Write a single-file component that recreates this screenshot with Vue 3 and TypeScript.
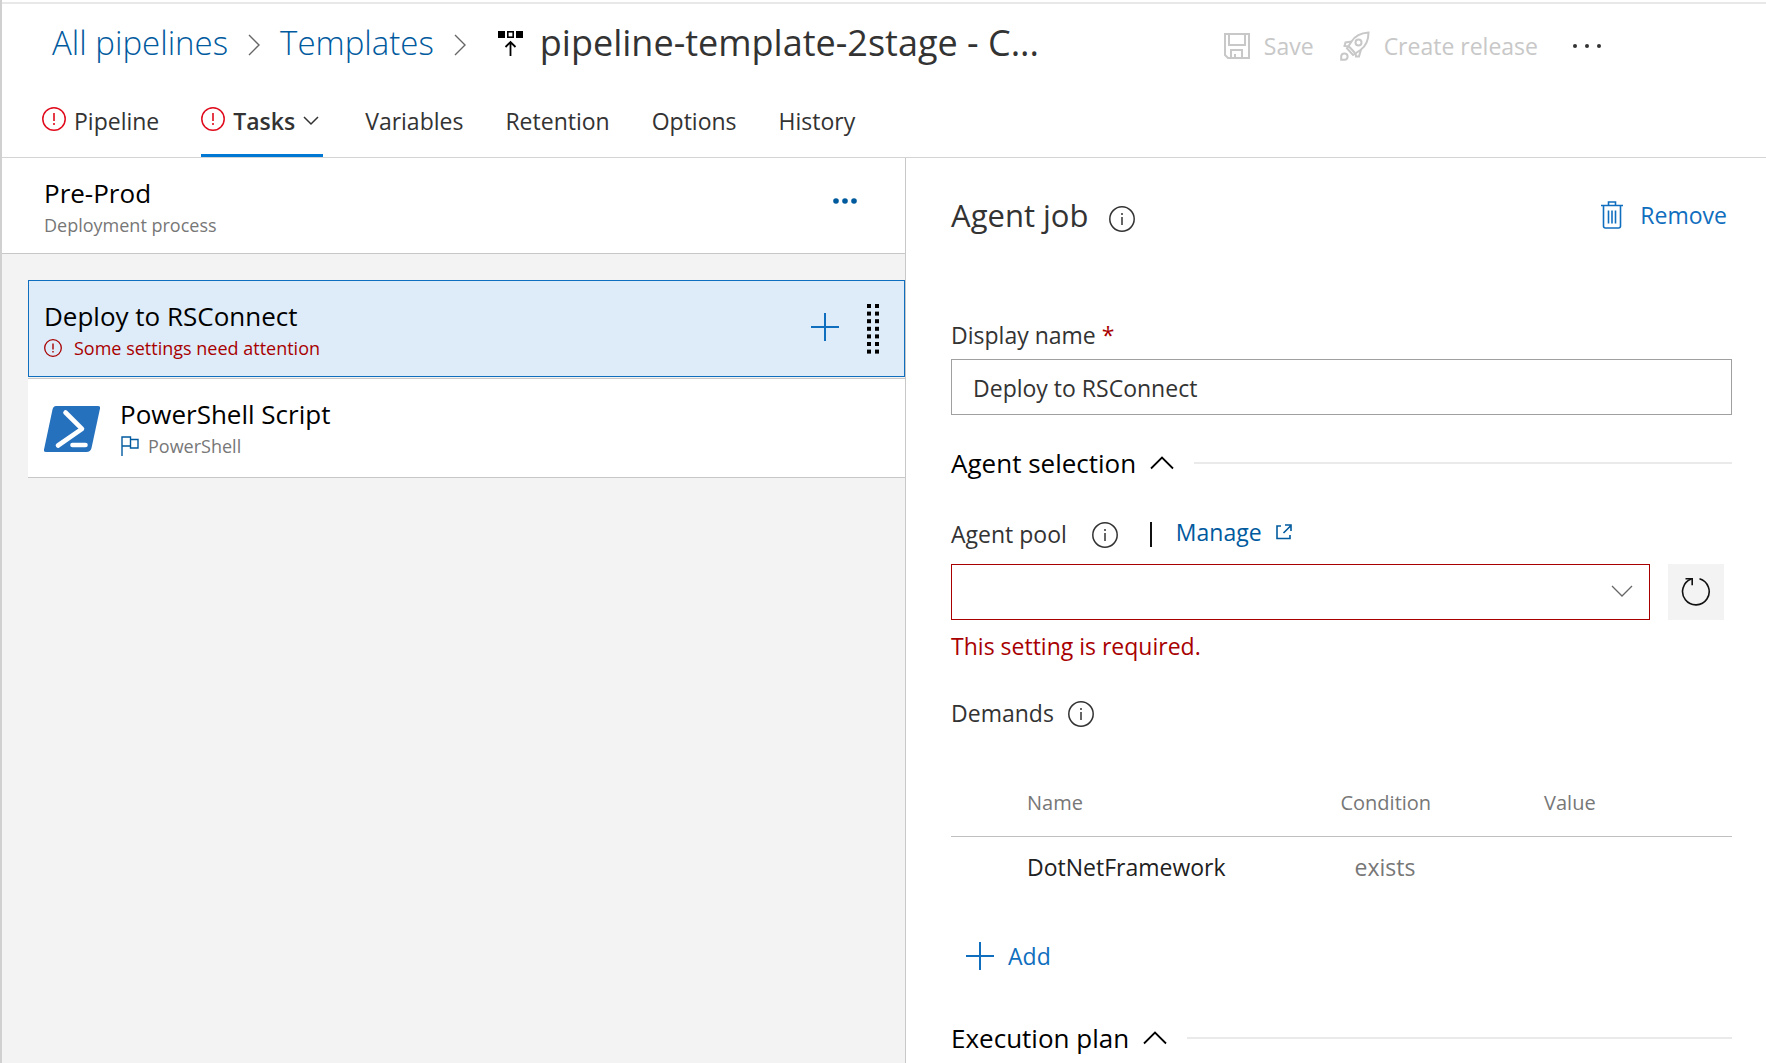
<script setup lang="ts">
import { ref } from 'vue'

interface Tab {
  label: string
  error?: boolean
  menu?: boolean
}

interface Demand {
  name: string
  condition: string
  value: string
}

const tabs: Tab[] = [
  { label: 'Pipeline', error: true },
  { label: 'Tasks', error: true, menu: true },
  { label: 'Variables' },
  { label: 'Retention' },
  { label: 'Options' },
  { label: 'History' },
]
const activeTab = ref('Tasks')

const displayName = ref('Deploy to RSConnect')
const agentPool = ref('')
const demands = ref<Demand[]>([{ name: 'DotNetFramework', condition: 'exists', value: '' }])
const gripRows = [0, 1, 2, 3, 4, 5, 6]
</script>

<template>
  <div class="page">
    <header class="header">
      <div class="title-row">
        <nav class="crumbs" aria-label="Breadcrumb">
          <a href="#">All pipelines</a>
          <svg class="crumb-sep" width="12" height="22" viewBox="0 0 12 22"><path d="M1 1l10 10L1 21" /></svg>
          <a href="#">Templates</a>
          <svg class="crumb-sep" width="12" height="22" viewBox="0 0 12 22"><path d="M1 1l10 10L1 21" /></svg>
          <svg class="release-icon" width="26" height="26" viewBox="0 0 26 26">
            <path d="M0 1h7v7H0zM18 1h7v7h-7z" fill="#000" />
            <rect x="9.8" y="1.8" width="5.4" height="5.4" fill="none" stroke="#000" stroke-width="1.6" />
            <path d="M12.5 26V12M7.5 17l5-5 5 5" fill="none" stroke="#000" stroke-width="1.8" />
          </svg>
          <h1>pipeline-template-2stage - C...</h1>
        </nav>
        <div class="actions">
          <button type="button" class="action" disabled>
            <svg width="26" height="26" viewBox="0 0 26 26" fill="none" stroke="currentColor" stroke-width="2">
              <path d="M1 1h24v24H4l-3-3z" />
              <path d="M5 1v11h16V1M7 25v-8h11v8M11 25v-4" />
            </svg>
            <span>Save</span>
          </button>
          <button type="button" class="action" disabled>
            <svg width="30" height="30" viewBox="0 0 30 30" fill="none" stroke="currentColor" stroke-width="2">
              <path d="M28.500 1.500C21 2 15 5 11.500 10.500L7 17.500l6 6.500 7.500-5C26 15 28.500 9 28.500 1.500z" />
              <circle cx="18.500" cy="11.500" r="3" />
              <path d="M12 10.500l-6.500 1-1 3.500 4 .5M21 18.500l-2 7h-3l-.5-3.500" />
              <path d="M9 15.500l6 6.500" />
              <path d="M1.200 28.800v-3.300a3.200 3.200 0 1 1 3.300 3.300z" />
            </svg>
            <span>Create release</span>
          </button>
          <button type="button" class="more" aria-label="More actions">
            <svg width="30" height="6" viewBox="0 0 30 6" fill="currentColor">
              <circle cx="3" cy="3" r="2" /><circle cx="15" cy="3" r="2" /><circle cx="27" cy="3" r="2" />
            </svg>
          </button>
        </div>
      </div>

      <div class="tabs" role="tablist">
        <button
          v-for="tab in tabs"
          :key="tab.label"
          type="button"
          role="tab"
          class="tab"
          :class="{ active: tab.label === activeTab }"
          :aria-selected="tab.label === activeTab"
          @click="activeTab = tab.label"
        >
          <svg v-if="tab.error" class="tab-error" width="24" height="24" viewBox="0 0 24 24">
            <circle cx="12" cy="12" r="11.200" fill="none" stroke="currentColor" stroke-width="1.500" />
            <path d="M12 6v8M12 16v2" stroke="currentColor" stroke-width="1.600" />
          </svg>
          <span>{{ tab.label }}</span>
          <svg v-if="tab.menu" width="16" height="10" viewBox="0 0 16 10" fill="none" stroke="currentColor" stroke-width="1.500">
            <path d="M1 1l7 7 7-7" />
          </svg>
        </button>
      </div>
    </header>

    <main class="body">
      <section class="process">
        <div class="stage">
          <div>
            <h2>Pre-Prod</h2>
            <p class="sub">Deployment process</p>
          </div>
          <button type="button" class="stage-more" aria-label="Stage options">
            <svg width="24" height="6" viewBox="0 0 24 6" fill="currentColor">
              <circle cx="3" cy="3" r="2.800" /><circle cx="12" cy="3" r="2.800" /><circle cx="21" cy="3" r="2.800" />
            </svg>
          </button>
        </div>

        <div class="list">
          <div class="job">
            <div>
              <h2>Deploy to RSConnect</h2>
              <p class="sub warn">
                <svg width="18" height="18" viewBox="0 0 18 18">
                  <circle cx="9" cy="9" r="8.300" fill="none" stroke="currentColor" stroke-width="1.300" />
                  <path d="M9 4.500v6M9 12v1.500" stroke="currentColor" stroke-width="1.400" />
                </svg>
                <span>Some settings need attention</span>
              </p>
            </div>
            <div class="job-tools">
              <button type="button" class="add-task" aria-label="Add a task">
                <svg width="28" height="28" viewBox="0 0 28 28"><path d="M14 0v28M0 14h28" stroke="currentColor" stroke-width="2" /></svg>
              </button>
              <svg width="12" height="50" viewBox="0 0 12 50">
                <g v-for="row in gripRows" :key="row">
                  <rect x="0" :y="row * 7.6" width="4" height="4" />
                  <rect x="8" :y="row * 7.6" width="4" height="4" />
                </g>
              </svg>
            </div>
          </div>

          <div class="task">
            <svg width="56" height="46" viewBox="0 0 56 46">
              <path d="M12 0h42q2.500 0 2 2.500L47.500 42q-1 4-5 4H2Q-.5 46 0 43.500L8.500 3.500Q9.300 0 12 0z" fill="#2671be" />
              <path d="M21.500 6.500L38 22.800 14 39.500" fill="none" stroke="#fff" stroke-width="4.600" stroke-linecap="round" stroke-linejoin="round" />
              <path d="M28.500 39h13" stroke="#fff" stroke-width="4.600" stroke-linecap="round" />
            </svg>
            <div>
              <h2>PowerShell Script</h2>
              <p class="sub">
                <svg width="18" height="20" viewBox="0 0 18 20" fill="none" stroke="#005a9e" stroke-width="1.400">
                  <path d="M1 20V1h8.500v9H1M9.500 3.500H17v8.500h-7.500v-2" />
                </svg>
                <span>PowerShell</span>
              </p>
            </div>
          </div>
        </div>
      </section>

      <section class="details">
        <div class="details-head">
          <h2>Agent job</h2>
          <svg class="info" width="26" height="26" viewBox="0 0 26 26">
            <circle cx="13" cy="13" r="12.200" /><path d="M13 11v8M13 7v2" />
          </svg>
          <button type="button" class="remove">
            <svg width="22" height="28" viewBox="0 0 22 28" fill="none" stroke="currentColor" stroke-width="1.600">
              <path d="M0 4.500h22M7.500 4V1h7v3M2.500 4.500V25q0 2 2 2h13q2 0 2-2V4.500M7.500 9.500v13M11 9.500v13M14.500 9.500v13" />
            </svg>
            <span>Remove</span>
          </button>
        </div>

        <label class="label name-label" for="display-name">Display name <span class="star">*</span></label>
        <input id="display-name" v-model="displayName" class="text-box" type="text" />

        <h3 class="section selection">
          <span>Agent selection</span>
          <svg width="24" height="14" viewBox="0 0 24 14"><path d="M1 12.500L12 1.500l11 11" /></svg>
        </h3>

        <div class="label-row pool-row">
          <label class="label" for="agent-pool">Agent pool</label>
          <svg class="info" width="26" height="26" viewBox="0 0 26 26">
            <circle cx="13" cy="13" r="12.200" /><path d="M13 11v8M13 7v2" />
          </svg>
          <span class="bar"></span>
          <a class="manage" href="#">
            <span>Manage</span>
            <svg width="16" height="16" viewBox="0 0 16 16" fill="none" stroke="currentColor" stroke-width="1.600">
              <path d="M5 2H1v12.500h13V11M7.500 9L14.500 2M9 1h6v6" />
            </svg>
          </a>
        </div>
        <div class="pool">
          <div class="select-wrap">
            <select id="agent-pool" v-model="agentPool">
              <option value=""></option>
            </select>
            <svg width="22" height="12" viewBox="0 0 22 12"><path d="M1 1l10 10L21 1" fill="none" stroke="#666" stroke-width="1.300" /></svg>
          </div>
          <button type="button" class="refresh" aria-label="Refresh">
            <svg width="30" height="30" viewBox="0 0 30 30" fill="none" stroke="#111" stroke-width="1.600">
              <path d="M18.500 1.800a13.300 13.300 0 1 1-8.200 .3" />
              <path d="M4.500 1.800h6.700v6.500" />
            </svg>
          </button>
        </div>
        <p class="error">This setting is required.</p>

        <div class="label-row demands-row">
          <span class="label">Demands</span>
          <svg class="info" width="26" height="26" viewBox="0 0 26 26">
            <circle cx="13" cy="13" r="12.200" /><path d="M13 11v8M13 7v2" />
          </svg>
        </div>
        <table class="demands">
          <thead>
            <tr><th scope="col">Name</th><th scope="col">Condition</th><th scope="col">Value</th></tr>
          </thead>
          <tbody>
            <tr v-for="d in demands" :key="d.name">
              <td>{{ d.name }}</td>
              <td class="condition">{{ d.condition }}</td>
              <td>{{ d.value }}</td>
            </tr>
          </tbody>
        </table>
        <button type="button" class="add">
          <svg width="28" height="28" viewBox="0 0 28 28"><path d="M14 0v28M0 14h28" stroke="currentColor" stroke-width="2" /></svg>
          <span>Add</span>
        </button>

        <h3 class="section plan">
          <span>Execution plan</span>
          <svg width="24" height="14" viewBox="0 0 24 14"><path d="M1 12.500L12 1.500l11 11" /></svg>
        </h3>
      </section>
    </main>
  </div>
</template>

<style>
body {
  margin: 0;
  background: #fff;
}
</style>

<style scoped>
.page {
  box-sizing: border-box;
  display: flex;
  flex-direction: column;
  height: 100vh;
  padding-top: 2px;
  overflow: hidden;
  border-left: 2px solid #d0d0d0;
  font: 23px/32px "Open Sans", "Noto Sans", sans-serif;
  color: #333;
}
h1, h2, h3, p {
  margin: 0;
  font-weight: 400;
}
a {
  text-decoration: none;
}
button {
  display: flex;
  align-items: center;
  padding: 0;
  border: 0;
  background: none;
  font: inherit;
  color: inherit;
  white-space: nowrap;
  cursor: pointer;
}
svg {
  display: block;
  flex: none;
}

.header {
  flex: none;
  border-top: 2px solid #e8e8e8;
  border-bottom: 1px solid #d4d4d4;
}
.title-row {
  display: flex;
  justify-content: space-between;
  padding: 16px 164px 16px 50px;
}
.crumbs {
  display: flex;
  align-items: center;
  height: 46px;
  white-space: nowrap;
}
.crumbs a {
  font-size: 33px;
  font-weight: 300;
  color: #005a9e;
}
.crumb-sep {
  margin: 4px 20px 0;
  fill: none;
  stroke: #666;
  stroke-width: 1.4;
}
.release-icon {
  margin: 0 16px 0 12px;
}
h1 {
  font-size: 36px;
}
.actions {
  display: flex;
  align-items: center;
  height: 52px;
}
.action {
  gap: 14px;
  margin-right: 26px;
  color: #c8c8c8;
  cursor: default;
}
.more {
  margin-left: 8px;
}

.tabs {
  display: flex;
  gap: 42px;
  padding-left: 40px;
}
.tab {
  box-sizing: border-box;
  gap: 8px;
  height: 69px;
  border-bottom: 3px solid transparent;
}
.tab.active {
  border-bottom-color: #0078d4;
  padding-right: 4px;
  font-weight: 600;
}
.tab-error {
  margin-bottom: 4px;
  color: #e00b1c;
}

.body {
  display: flex;
  flex: 1;
  min-height: 0;
}
.process {
  box-sizing: border-box;
  flex: none;
  width: 51.25%;
  border-right: 1px solid #c8c8c8;
  background: #f3f3f3;
}
.process h2 {
  font-size: 26px;
  line-height: 34px;
  color: #000;
}
.sub {
  display: flex;
  align-items: center;
  font-size: 18px;
  line-height: 30px;
  color: #777;
}
.stage {
  display: flex;
  align-items: center;
  justify-content: space-between;
  padding: 18px 48px 13px 42px;
  border-bottom: 1px solid #c8c8c8;
  background: #fff;
}
.stage-more {
  padding-bottom: 14px;
  color: #005a9e;
}
.list {
  padding: 26px 0 0 26px;
}
.job {
  display: flex;
  justify-content: space-between;
  padding: 18px 25px 13px 15px;
  border: 1px solid #106ebe;
  background: #deecf9;
}
.warn {
  gap: 12px;
  color: #a80000;
}
.job-tools {
  display: flex;
  align-items: center;
  gap: 28px;
  padding-bottom: 4px;
}
.add-task {
  padding-bottom: 4px;
  color: #106ebe;
}
.task {
  display: flex;
  align-items: center;
  gap: 20px;
  margin-top: 1px;
  padding: 18px 16px 16px;
  border: solid #c8c8c8;
  border-width: 1px 0;
  background: #fff;
}
.task .sub {
  gap: 9px;
  padding-left: 1px;
}

.details {
  flex: 1;
  min-width: 0;
  padding: 33px 34px 0 45px;
  overflow: hidden;
}
.details-head {
  display: flex;
  align-items: center;
  height: 48px;
}
.details-head h2 {
  font-size: 31px;
}
.info {
  margin: 2px 0 0 21px;
  fill: none;
  stroke: #333;
  stroke-width: 1.5;
}
.details-head .info {
  margin-top: 8px;
}
.remove {
  gap: 17px;
  margin-left: auto;
  padding-right: 5px;
  color: #106ebe;
}
.label {
  display: block;
}
.name-label {
  margin: 80px 0 8px;
}
.star {
  color: #a80000;
}
.text-box {
  box-sizing: border-box;
  display: block;
  width: 100%;
  height: 56px;
  padding: 2px 21px 0;
  border: 1px solid #a0a0a0;
  border-radius: 0;
  font: inherit;
  color: inherit;
}
.section {
  display: flex;
  align-items: center;
  gap: 14px;
  font-size: 26px;
  line-height: 36px;
  color: #000;
}
.section svg {
  fill: none;
  stroke: #000;
  stroke-width: 1.8;
}
.section::after {
  content: "";
  flex: 1;
  height: 2px;
  margin-left: 6px;
  background: #eaeaea;
}
.selection {
  margin-top: 30px;
}
.label-row {
  display: flex;
  align-items: center;
}
.pool-row {
  margin: 37px 0 14px;
}
.pool-row .info {
  margin-left: 25px;
}
.bar {
  width: 2px;
  height: 25px;
  margin: 0 24px 0 32px;
  background: #111;
}
.manage {
  display: flex;
  align-items: center;
  gap: 14px;
  margin-bottom: 4px;
  line-height: 28px;
  color: #005a9e;
}
.pool {
  display: flex;
  gap: 18px;
  padding-right: 8px;
}
.select-wrap {
  position: relative;
  flex: 1;
}
.select-wrap select {
  display: block;
  width: 100%;
  height: 56px;
  padding: 0 21px;
  border: 1px solid #a80000;
  border-radius: 0;
  background: #fff;
  appearance: none;
  font: inherit;
  color: inherit;
}
.select-wrap svg {
  position: absolute;
  top: 21px;
  right: 17px;
  pointer-events: none;
}
.refresh {
  justify-content: center;
  width: 56px;
  height: 56px;
  background: #f3f3f3;
}
.error {
  margin-top: 10px;
  color: #a80000;
}
.demands-row {
  margin: 35px 0 41px;
}
.demands-row .info {
  margin-left: 14px;
}
.demands {
  width: 100%;
  border-collapse: collapse;
  table-layout: fixed;
}
.demands th {
  width: 26%;
  height: 66px;
  padding: 0;
  border-bottom: 1px solid #c0c0c0;
  font-size: 20px;
  font-weight: 400;
  text-align: left;
  color: #777;
}
.demands th:first-child {
  width: 40%;
}
.demands th:last-child {
  width: 24%;
}
.demands td {
  height: 60px;
  padding: 0;
  color: #212121;
}
.demands th:first-child,
.demands td:first-child {
  padding-left: 76px;
}
.demands .condition {
  padding-left: 14px;
  color: #777;
}
.add {
  gap: 14px;
  margin: 43px 0 48px 15px;
  color: #106ebe;
}
</style>
